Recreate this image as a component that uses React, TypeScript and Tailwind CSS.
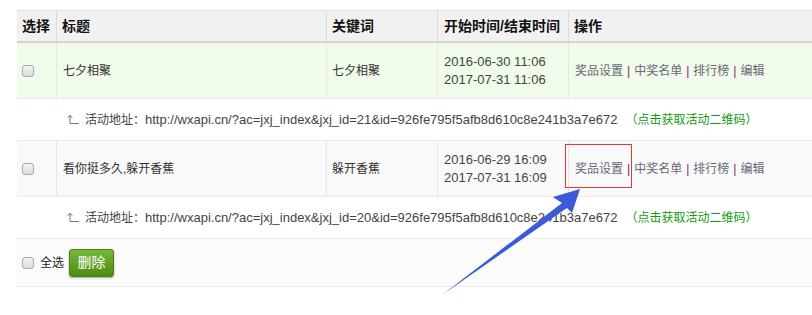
import React from "react";

interface Activity {
  id: number;
  title: string;
  keyword: string;
  start: string;
  end: string;
  url: string;
  bg: string;
}

const activities: Activity[] = [
  {
    id: 21,
    title: "七夕相聚",
    keyword: "七夕相聚",
    start: "2016-06-30 11:06",
    end: "2017-07-31 11:06",
    url: "http://wxapi.cn/?ac=jxj_index&jxj_id=21&id=926fe795f5afb8d610c8e241b3a7e672",
    bg: "bg-[#f0fbe9]",
  },
  {
    id: 20,
    title: "看你挺多久,躲开香蕉",
    keyword: "躲开香蕉",
    start: "2016-06-29 16:09",
    end: "2017-07-31 16:09",
    url: "http://wxapi.cn/?ac=jxj_index&jxj_id=20&id=926fe795f5afb8d610c8e241b3a7e672",
    bg: "bg-[#f9f9f9]",
  },
];

const actions = ["奖品设置", "中奖名单", "排行榜", "编辑"];

const ReturnIcon = () => (
  <svg width="12" height="11" viewBox="0 0 12 11" className="mr-[6px] shrink-0">
    <path d="M3 1.5 V9.5 H12" fill="none" stroke="#777" strokeWidth="1" />
    <path d="M0.8 3.8 L3 1.2 L5.2 3.8" fill="none" stroke="#777" strokeWidth="1" />
  </svg>
);

const Checkbox = () => (
  <span className="block w-[12px] h-[12px] rounded-[3px] border border-[#a9a9a9] bg-gradient-to-b from-[#f4f4f4] to-[#dcdcdc]" />
);

const cols = "grid grid-cols-[40px_270px_111px_131px_1fr]";

export default function App() {
  return (
    <div
      className="relative w-[812px] h-[315px] bg-white overflow-hidden text-[12px] text-[#333]"
      style={{ fontFamily: '"Liberation Sans", "Noto Sans CJK SC", sans-serif' }}
    >
      <div className="ml-[17px] pt-[10px]">
        {/* header */}
        <div className={`${cols} h-[33px] bg-[#f1f1f1] border-t border-[#e0e0e0] border-b-2 border-b-[#d4d4d4] text-[14px] font-bold text-[#111]`}>
          <div className="flex items-center pl-[5px] border-r border-[#dcdcdc]">选择</div>
          <div className="flex items-center pl-[5px] border-r border-[#dcdcdc]">标题</div>
          <div className="flex items-center pl-[5px] border-r border-[#dcdcdc]">关键词</div>
          <div className="flex items-center pl-[6px] border-r border-[#dcdcdc]">开始时间/结束时间</div>
          <div className="flex items-center pl-[5px]">操作</div>
        </div>

        {activities.map((a, i) => (
          <React.Fragment key={a.id}>
            <div className={`${cols} ${a.bg} ${i === 0 ? "h-[56px]" : "h-[57px] border-t border-[#ececec]"} border-b border-[#ececec]`}>
              <div className="flex items-center pl-[5px] border-r border-[#e6e6e6]">
                <Checkbox />
              </div>
              <div className="flex items-center pl-[6px] border-r border-[#e6e6e6]">{a.title}</div>
              <div className="flex items-center pl-[5px] border-r border-[#e6e6e6]">{a.keyword}</div>
              <div className="flex flex-col justify-center pl-[6px] border-r border-[#e6e6e6] text-[13px] leading-[18px] text-[#444]">
                <span>{a.start}</span>
                <span>{a.end}</span>
              </div>
              <div className="flex items-center pl-[6px] text-[#686878]">
                {actions.map((act, k) => (
                  <React.Fragment key={act}>
                    {k > 0 && <span className="px-[4px] text-[#7b2270]">|</span>}
                    <span>{act}</span>
                  </React.Fragment>
                ))}
              </div>
            </div>
            <div className="h-[41px] flex items-center pl-[50px] text-[#444]">
              <ReturnIcon />
              <span>活动地址：</span>
              <span className="text-[13px]">{a.url}</span>
              <span className="ml-[8px] text-[#129a10]">（点击获取活动二维码）</span>
            </div>
          </React.Fragment>
        ))}

        {/* footer */}
        <div className="h-[49px] flex items-center pl-[5px] bg-[#fbfbfb] border-t border-b border-[#ececec]">
          <Checkbox />
          <span className="ml-[6px] mr-[5px] text-[#222]">全选</span>
          <button className="w-[45px] h-[28px] rounded-[3px] border border-[#4b7f12] bg-gradient-to-b from-[#74b83a] to-[#4d8d0c] text-white text-[14px] shadow-[0_1px_2px_rgba(0,0,0,0.35)]">
            删除
          </button>
        </div>
      </div>

      {/* annotation overlay */}
      <div className="absolute left-[565px] top-[144px] w-[67px] h-[44px] border border-[#e53935]" />
      <svg className="absolute left-0 top-0 pointer-events-none" width="812" height="315" viewBox="0 0 812 315">
        <polygon points="580,189 553,197 562,203 442,295 567,208 572,213" fill="#3b5bd8" />
      </svg>
    </div>
  );
}
